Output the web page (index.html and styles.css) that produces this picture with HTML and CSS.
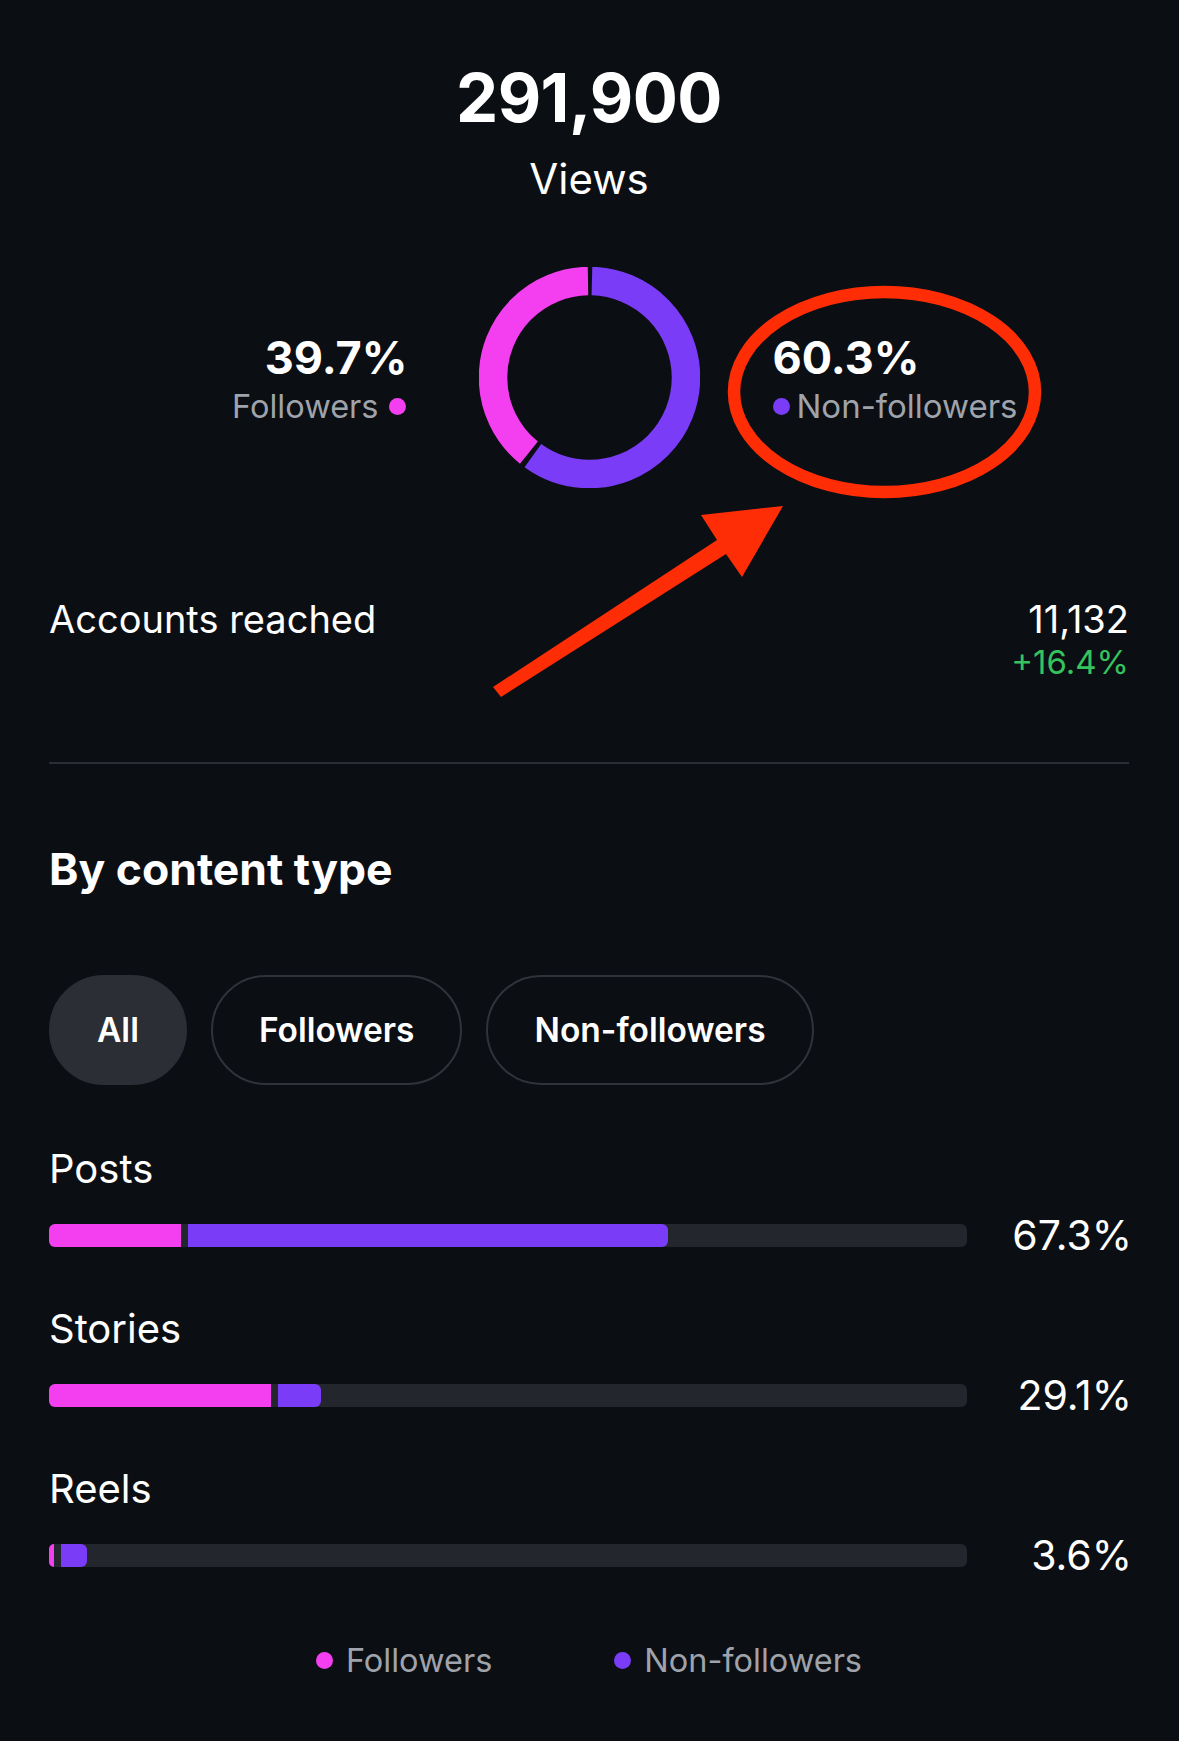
FILE: index.html
```html
<!DOCTYPE html>
<html lang="en">
<head>
<meta charset="utf-8">
<title>Views insights</title>
<link rel="stylesheet" href="styles.css">
</head>
<body>
<div class="page">
  <header class="hero">
    <div class="hero-value">291,900</div>
    <div class="hero-label">Views</div>
  </header>

  <section class="split">
    <div class="split-side split-left">
      <div class="split-pct">39.7%</div>
      <div class="split-name"><span>Followers</span><span class="dot dot-pink"></span></div>
    </div>
    <svg class="donut" width="221" height="221" viewBox="0 0 221 221">
      <g transform="rotate(-90 110.5 110.5)">
        <circle cx="110.5" cy="110.5" r="96.5" fill="none" stroke="#7b3cf7" stroke-width="28.5" stroke-dasharray="360.6 1000" stroke-dashoffset="-2.5"/>
        <circle cx="110.5" cy="110.5" r="96.5" fill="none" stroke="#f33ff0" stroke-width="28.5" stroke-dasharray="235.7 1000" stroke-dashoffset="-368.1"/>
      </g>
    </svg>
    <div class="split-side split-right">
      <div class="split-pct">60.3%</div>
      <div class="split-name"><span class="dot dot-purple"></span><span>Non-followers</span></div>
    </div>
  </section>

  <section class="reach">
    <div class="reach-label">Accounts reached</div>
    <div class="reach-values">
      <div class="reach-value">11,132</div>
      <div class="reach-change">+16.4%</div>
    </div>
  </section>

  <hr class="divider">

  <h2 class="section-title">By content type</h2>

  <div class="chips">
    <div class="chip chip-active">All</div>
    <div class="chip">Followers</div>
    <div class="chip">Non-followers</div>
  </div>

  <div class="types">
    <div class="type">
      <div class="type-name">Posts</div>
      <div class="type-row">
        <div class="track">
          <div class="seg seg-pink" style="width:14.41%"></div>
          <div class="seg seg-purple" style="width:52.29%"></div>
        </div>
        <div class="type-pct">67.3%</div>
      </div>
    </div>
    <div class="type">
      <div class="type-name">Stories</div>
      <div class="type-row">
        <div class="track">
          <div class="seg seg-pink" style="width:24.13%"></div>
          <div class="seg seg-purple" style="width:4.69%"></div>
        </div>
        <div class="type-pct">29.1%</div>
      </div>
    </div>
    <div class="type">
      <div class="type-name">Reels</div>
      <div class="type-row">
        <div class="track">
          <div class="seg seg-pink" style="width:0.5%"></div>
          <div class="seg seg-purple" style="width:2.84%"></div>
        </div>
        <div class="type-pct">3.6%</div>
      </div>
    </div>
  </div>

  <div class="legend">
    <div class="legend-item"><span class="dot dot-pink"></span><span>Followers</span></div>
    <div class="legend-item"><span class="dot dot-purple"></span><span>Non-followers</span></div>
  </div>

  <svg class="annotation" width="1179" height="1741" viewBox="0 0 1179 1741">
    <ellipse cx="884.5" cy="392" rx="150.5" ry="100" fill="none" stroke="#ff2d05" stroke-width="12.5"/>
    <polygon points="493,687 717,540 701,515 783,506 742,577 726,554 501,697" fill="#ff2d05"/>
  </svg>
</div>
</body>
</html>
```

FILE: styles.css
```css
* { box-sizing: border-box; }

html, body {
  margin: 0;
  padding: 0;
  background: #0b0e13;
}

body {
  font-family: Inter, "Noto Sans", "Liberation Sans", sans-serif;
  color: #ffffff;
  width: 1179px;
  min-height: 1741px;
}

.page {
  position: relative;
  padding: 58px 50px 0 49px;
  min-height: 1741px;
}

/* Hero */
.hero {
  display: flex;
  flex-direction: column;
  align-items: center;
}

.hero-value {
  font-size: 67px;
  font-weight: 700;
  line-height: 1.2;
  letter-spacing: -0.6px;
}

.hero-label {
  margin-top: 16px;
  font-size: 42px;
  font-weight: 400;
  line-height: 1.2;
}

/* Donut split */
.split {
  margin-top: 62px;
  display: flex;
  align-items: center;
  gap: 73px;
}

.split-side {
  flex: 1 1 0;
  display: flex;
  flex-direction: column;
  padding-top: 6px;
}

.split-left { align-items: flex-end; }
.split-right { align-items: flex-start; }

.split-pct {
  font-size: 45px;
  font-weight: 700;
  line-height: 1.05;
}

.split-left .split-pct { margin-right: -2px; }

.split-name {
  margin-top: 6px;
  display: flex;
  align-items: center;
  font-size: 32.5px;
  line-height: 1.2;
  color: #9fa3ab;
}

.split-right .split-name { font-size: 33px; }

.split-left .split-name { gap: 10px; }
.split-right .split-name { gap: 7px; }

.donut { flex: none; display: block; }

.dot {
  display: inline-block;
  width: 17px;
  height: 17px;
  border-radius: 50%;
  flex: none;
}

.dot-pink { background: #f33ff0; }
.dot-purple { background: #7b3cf7; }

/* Reach */
.reach {
  margin-top: 110px;
  display: flex;
  justify-content: space-between;
  align-items: flex-start;
}

.reach-label {
  font-size: 38px;
  line-height: 1.15;
}

.reach-values {
  display: flex;
  flex-direction: column;
  align-items: flex-end;
}

.reach-value {
  font-size: 38px;
  line-height: 1.15;
}

.reach-change {
  margin-top: 2px;
  font-size: 33px;
  line-height: 1.2;
  color: #35c35d;
}

.divider {
  margin: 79px 0 0;
  border: 0;
  height: 2px;
  background: #2a2d33;
}

.section-title {
  margin: 79px 0 0;
  font-size: 44.5px;
  font-weight: 700;
  line-height: 1.2;
}

/* Chips */
.chips {
  margin-top: 79px;
  display: flex;
  gap: 24px;
}

.chip {
  height: 110px;
  padding: 0 46px;
  border: 2.5px solid #303339;
  border-radius: 56px;
  display: flex;
  align-items: center;
  font-size: 33.5px;
  font-weight: 600;
  line-height: 1;
}

.chip-active {
  background: #2b2e35;
  border-color: #2b2e35;
}

/* Content types */
.types {
  margin-top: 60px;
  display: flex;
  flex-direction: column;
  gap: 48px;
}

.type-name {
  font-size: 40px;
  line-height: 1.2;
}

.type-row {
  margin-top: 20px;
  height: 44px;
  display: flex;
  align-items: center;
}

.track {
  flex: 1 1 auto;
  height: 23px;
  border-radius: 6px;
  background: #23262c;
  display: flex;
  gap: 7px;
}

.seg { height: 100%; }

.seg-pink {
  background: #f33ff0;
  border-radius: 6px 0 0 6px;
}

.seg-purple {
  background: #7b3cf7;
  border-radius: 0 6px 6px 0;
}

.type-pct {
  flex: none;
  width: 165px;
  margin-right: -3px;
  text-align: right;
  font-size: 41px;
  line-height: 1.1;
}

/* Legend */
.legend {
  margin-top: 64px;
  display: flex;
  justify-content: center;
  gap: 122px;
  font-size: 32.5px;
  line-height: 1.2;
  color: #9fa3ab;
}

.legend-item {
  display: flex;
  align-items: center;
  gap: 13px;
}

/* Annotation overlay */
.annotation {
  position: absolute;
  left: 0;
  top: 0;
  pointer-events: none;
}
```
